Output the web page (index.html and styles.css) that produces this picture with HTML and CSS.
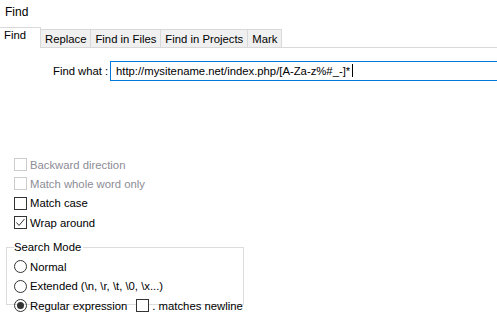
FILE: index.html
```html
<!DOCTYPE html>
<html lang="en">
<head>
    <meta charset="UTF-8">
    <title>Find</title>
    <link rel="stylesheet" href="styles.css">
</head>
<body>
    <div class="title">Find</div>

    <div class="tabs">
        <div class="tab active">Find</div>
        <div class="tab">Replace</div>
        <div class="tab">Find in Files</div>
        <div class="tab">Find in Projects</div>
        <div class="tab">Mark</div>
    </div>

    <div class="find-row">
        <span class="find-label">Find what :</span>
        <div class="find-input">http://mysitename.net/index.php/[A-Za-z%#_-]*<span class="caret"></span></div>
    </div>

    <div class="options">
        <div class="check-row disabled"><span class="box"></span>Backward direction</div>
        <div class="check-row disabled"><span class="box"></span>Match whole word only</div>
        <div class="check-row"><span class="box"></span>Match case</div>
        <div class="check-row"><span class="box"><svg width="11" height="11" viewBox="0 0 11 11"><polyline points="1.5,5.5 4,8.5 9.5,2" fill="none" stroke="#333" stroke-width="1"/></svg></span>Wrap around</div>
    </div>

    <fieldset class="search-mode">
        <legend>Search Mode</legend>
        <div class="radio-row"><span class="radio"></span>Normal</div>
        <div class="radio-row"><span class="radio"></span>Extended (\n, \r, \t, \0, \x...)</div>
        <div class="radio-row"><span class="radio checked"></span>Regular expression<span class="check-inline"><span class="box"></span>. matches newline</span></div>
    </fieldset>
</body>
</html>
```

FILE: styles.css
```css
body {
    margin: 0;
    background: #fff;
    font-family: "Liberation Sans", Arial, sans-serif;
    font-size: 11.3px;
    color: #000;
    width: 497px;
    height: 323px;
    overflow: hidden;
    white-space: nowrap;
}
.title {
    padding: 4px 0 0 5px;
    height: 23px;
    line-height: 16px;
    font-size: 12px;
}
.tabs {
    display: flex;
    align-items: flex-end;
    height: 20px;
    border-bottom: 1px solid #d9d9d9;
}
.tab {
    height: 17px;
    line-height: 19px;
    padding: 0 4px;
    background: #f0f0f0;
    border: 1px solid #d9d9d9;
    border-bottom: none;
    border-left: none;
}
.tab.active {
    background: #fff;
    height: 20px;
    line-height: 15px;
    width: 32px;
    margin-bottom: -1px;
}
.find-row {
    display: flex;
    align-items: center;
    margin-top: 13px;
    padding-left: 53px;
    height: 20px;
}
.find-label {
    flex-shrink: 0;
    width: 57px;
}
.find-input {
    flex: 1;
    height: 18px;
    line-height: 18px;
    border: 1px solid #0078d7;
    border-right: none;
    padding-left: 5px;
}
.caret {
    display: inline-block;
    width: 1px;
    height: 13px;
    background: #000;
    vertical-align: -2px;
    margin-left: 2px;
}
.options {
    margin-top: 74px;
    padding-left: 14px;
}
.check-row {
    display: flex;
    align-items: center;
    height: 19.3px;
}
.box {
    width: 11px;
    height: 11px;
    border: 1px solid #333;
    background: #fff;
    margin-right: 3px;
    display: inline-flex;
    flex-shrink: 0;
}
.disabled {
    color: #8c8c96;
}
.disabled .box {
    border-color: #ccc;
}
.search-mode {
    margin: 8px 0 0 6px;
    width: 229px;
    min-width: 0;
    height: 60px;
    padding: 3px 0 0 7px;
    border: 1px solid #dcdcdc;
}
.search-mode legend {
    padding: 0 2px 0 0;
    line-height: 14px;
}
.radio-row {
    display: flex;
    align-items: center;
    height: 19.5px;
}
.radio {
    width: 11px;
    height: 11px;
    border: 1px solid #333;
    border-radius: 50%;
    margin-right: 3px;
    display: inline-flex;
    align-items: center;
    justify-content: center;
    flex-shrink: 0;
}
.radio.checked::after {
    content: "";
    width: 7px;
    height: 7px;
    border-radius: 50%;
    background: #333;
}
.check-inline {
    display: inline-flex;
    align-items: center;
    margin-left: 9px;
}
```
